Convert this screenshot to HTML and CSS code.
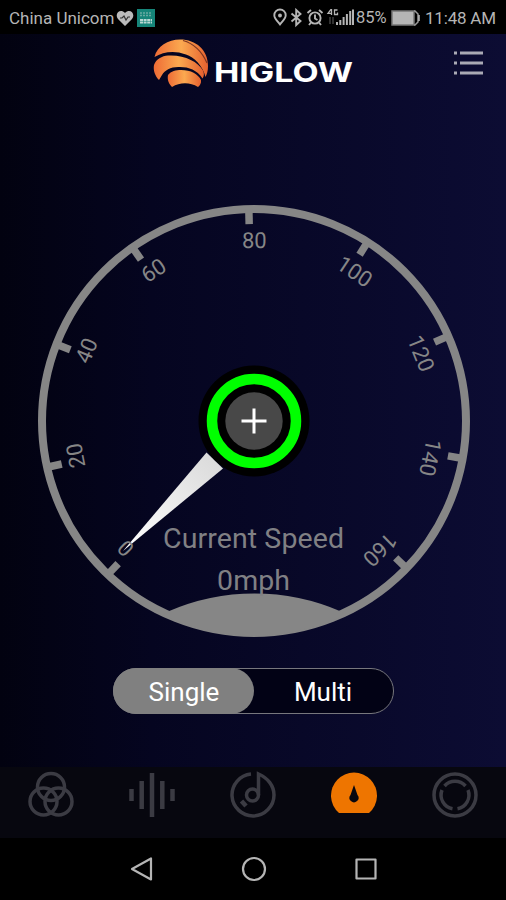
FILE: index.html
```
<!DOCTYPE html>
<html lang="en">
<head>
    <meta charset="UTF-8">
    <meta name="viewport" content="width=device-width, initial-scale=1.0">
    <title>Higlow</title>
    <link rel="stylesheet" href="styles.css">
</head>
<body>
    <!-- Phone status bar -->
    <div class="status">
        <span class="carrier">China Unicom</span>
        <svg class="heart" width="18" height="17" viewBox="0 0 18 17">
            <path d="M9 16 2 9C-2 4 4-2 9 3c5-5 11 1 7 6z" fill="#bbb"/>
            <path d="M4 8h2l2-2 2 4 2-3h2" fill="none" stroke="#333" stroke-width="1.2"/>
        </svg>
        <svg class="app" width="18" height="18" viewBox="0 0 18 18">
            <path d="M0 0h18v18H0z" fill="#168579"/>
            <path d="M3 4h12M3 6.500h12" stroke="#69aaa2" stroke-width="1.500" stroke-dasharray="2 1"/>
            <path d="M3 11h12M3 13.500h12" stroke="#b9d8d4" stroke-width="2" stroke-dasharray="3 .6"/>
        </svg>
        <svg class="signals" width="82" height="20" viewBox="0 0 82 20" fill="none" stroke="#b5b5b5" stroke-width="1.900">
            <path d="M7 16.500C4 12.500 1.300 10.500 1.300 7.200a5.700 5.700 0 0 1 11.400 0C12.700 10.500 10 12.500 7 16.500z"/>
            <circle cx="7" cy="7.500" r="1" />
            <path d="M18.500 5.500 27.500 13l-4.300 4V2l4.300 4-9 7.500"/>
            <circle cx="42" cy="10" r="5.600"/>
            <path d="M42 6.500V10.500l2.500 1.500M34.500 5l3.500-3M46 2l3.500 3M38 14.500l-2 2.500M46 14.500l2 2.500"/>
            <path d="M58.500 1v6M58.500 5.300h-3.500l3-4M64.500 2h-3v4.500h3V4.500" stroke-width="1.300"/>
            <path d="M57 9v7M60 9v7" stroke="#333"/>
            <path d="M64 17v-3M67.300 17v-5M70.600 17V9M73.900 17V6M77.200 17V3M80 17V1.500" stroke-width="2"/>
        </svg>
        <span class="percent">85%</span>
        <svg class="battery" width="29" height="16" viewBox="0 0 29 16">
            <path d="M1 1h22v14H1z" fill="#b5b5b5" stroke="#777" stroke-width="1.500"/>
            <path d="M23 1h1l3 3v8l-3 3h-1" fill="none" stroke="#999" stroke-width="1.500"/>
            <path d="M28 5v6" stroke="#bbb" stroke-width="1.500"/>
        </svg>
        <span class="time">11:48 AM</span>
    </div>

    <header class="header">
        <svg class="logo" width="56" height="52" viewBox="0 0 56 52">
            <defs>
                <linearGradient id="flame">
                    <stop offset="0" stop-color="#ee6b35"/>
                    <stop offset=".5" stop-color="#fba950"/>
                    <stop offset="1" stop-color="#e5602f"/>
                </linearGradient>
            </defs>
            <g fill="url(#flame)">
                <path d="M1.500 21C4 10 15 3.500 27 3.500 43 3.500 55 14 55 30c0 5-1 8-2.500 11C50 30 41 21 33 18.500 21 14 10 16 1.500 21z"/>
                <path d="M1 29C3 23 9 20 15 19.500c16-1 30 6 35 15 1.500 3 1 6-.5 8C44 34 36 31 27 31c-9-.5-15 3-18 8l-3 5C2 40 0 34 1 29z"/>
                <path d="M15 39c3-4 8-5 13-5 10 0 17 4 20 10 .5 3-1 5.500-3 7-8-5-18-5-26 0-3-3-5-7-4-12z"/>
            </g>
            <path d="M30 4.500Q46 9 54 27" fill="none" stroke="#7b3520" stroke-width="1.200"/>
        </svg>
        <span class="brand">HIGLOW</span>
        <svg class="menu" width="31" height="26" viewBox="0 0 31 26" stroke="#aaaab5" stroke-width="3">
            <path d="M1 3h3M7 3h23M1 13h3M7 13h23M1 23h3M7 23h23"/>
        </svg>
    </header>

    <main class="speed">
        <svg class="gauge" width="440" height="440" viewBox="-220 -220 440 440">
            <defs>
                <linearGradient id="needle" x1="0" x2="1" y1="1" y2="0">
                    <stop offset="0" stop-color="#fff"/>
                    <stop offset="1" stop-color="#d8d8d8"/>
                </linearGradient>
            </defs>
            <circle class="dial" r="212"/>
            <!-- Ticks are 33.8 degrees apart -->
            <g class="ticks">
                <path d="M0-212v15" transform="rotate(-136.400)"/>
                <path d="M0-212v15" transform="rotate(-102.600)"/>
                <path d="M0-212v15" transform="rotate(-68.800)"/>
                <path d="M0-212v15" transform="rotate(-35)"/>
                <path d="M0-212v15" transform="rotate(-1.400)"/>
                <path d="M0-212v15" transform="rotate(32.400)"/>
                <path d="M0-212v15" transform="rotate(66.400)"/>
                <path d="M0-212v15" transform="rotate(100.200)"/>
                <path d="M0-212v15" transform="rotate(134)"/>
            </g>
            <path d="M-47.500 31.500-131 130-31 47.500z" fill="url(#needle)"/>
            <g class="numbers">
                <text y="-173" transform="rotate(-134.800)">0</text>
                <text y="-174" transform="rotate(-101)">20</text>
                <text y="-174" transform="rotate(-67.200)">40</text>
                <text y="-173.500" transform="rotate(-33.700)">60</text>
                <text y="-173" transform="rotate(.1)">80</text>
                <text y="-172.500" transform="rotate(34)">100</text>
                <text y="-172.500" transform="rotate(68)">120</text>
                <text y="-172.500" transform="rotate(101.800)">140</text>
                <text y="-172.500" transform="rotate(135.600)">160</text>
            </g>
            <path d="M-86 190.500A217 217 0 0 1 87 190.500L91 194A215 215 0 0 1-91 194z" fill="#868686"/>
            <text class="reading" x="-.5" y="126.500" textLength="181">Current Speed</text>
            <text class="reading" x="-.5" y="168.500" textLength="73">0mph</text>
            <circle r="55.500"/>
            <circle r="42" fill="none" stroke="#0f0" stroke-width="10.500"/>
            <circle r="28.700" fill="#484848"/>
            <path d="M-12.500 0h25M0-12.500v25" stroke="#fff" stroke-width="3"/>
        </svg>

        <div class="switch">
            <span class="option active">Single</span>
            <span class="option">Multi</span>
        </div>
    </main>

    <nav class="tabs">
        <svg width="48" height="48" viewBox="-24 -24 48 48">
            <circle cy="-8" r="13.500"/>
            <circle cx="-7.500" cy="6.500" r="13.500"/>
            <circle cx="7.500" cy="6.500" r="13.500"/>
        </svg>
        <svg width="48" height="48" viewBox="-24 -24 48 48">
            <path d="M-20.500-6V6M-10.300-14V14M0-22V22M10.300-14V14M20.500-6V6" stroke-width="4.500"/>
        </svg>
        <svg width="48" height="48" viewBox="-24 -24 48 48">
            <path d="M-2-21A21 21 0 1 0 21 0C21-9 15-17 5.500-21V0"/>
            <circle cx="-.5" r="6"/>
            <path d="M-11.500 6-7 11" stroke-width="4.500"/>
        </svg>
        <svg width="48" height="48" viewBox="-24 -24 48 48">
            <path class="on" d="M-15 18A23 23 0 1 1 15 18z"/>
            <path class="hand" d="M0-10 3.500 0A4.500 4.500 0 1 1-3.500 0z"/>
        </svg>
        <svg width="48" height="48" viewBox="-24 -24 48 48">
            <circle r="21"/>
            <path d="M-10.500-9A14 14 0 0 1 10.500-9M13-5A14 14 0 0 1 2.500 13.800M-2.500 13.800A14 14 0 0 1-13-5"/>
        </svg>
    </nav>

    <!-- Android back, home and recent buttons -->
    <div class="buttons">
        <svg width="26" height="26" viewBox="0 0 26 26"><path d="M22 2.500v21L3 13z"/></svg>
        <svg width="26" height="26" viewBox="0 0 26 26"><circle cx="13" cy="13" r="11"/></svg>
        <svg width="26" height="26" viewBox="0 0 26 26"><path d="M3.500 3.500h19v19h-19z"/></svg>
    </div>
</body>
</html>
```
FILE: styles.css
```
* {
    box-sizing: border-box;
}

body {
    margin: 0;
    width: 506px;
    height: 900px;
    display: flex;
    flex-direction: column;
    overflow: hidden;
    font-family: Roboto, sans-serif;
    background: linear-gradient(to right, #020210, #050520 30%, #080828 60%, #0c0c33);
}

svg {
    display: block;
    flex: none;
}

/* Status bar */
.status {
    height: 34px;
    flex: none;
    display: flex;
    align-items: center;
    padding: 2px 10px 0 9px;
    background: #000;
    color: #b5b5b5;
    font-size: 17px;
    white-space: nowrap;
}

.carrier {
    width: 107px;
}

.app {
    margin-left: 3px;
}

.signals {
    margin-left: auto;
}

.percent {
    width: 31px;
    margin: -2px 0 0 1px;
    font-size: 16.5px;
}

.battery {
    margin-left: 4px;
}

.time {
    width: 71px;
    margin-left: 5px;
    letter-spacing: -0.2px;
}

/* Logo and menu */
.header {
    height: 66px;
    flex: none;
    display: flex;
    align-items: flex-start;
    padding: 2px 22px 0 153px;
}

.brand {
    margin: 20px 0 0 5px;
    color: #fff;
    font-family: Inter, sans-serif;
    font-size: 26.5px;
    font-weight: 700;
    line-height: 32px;
    transform: scaleX(1.28);
    transform-origin: left;
}

.menu {
    margin: 14px 0 0 auto;
}

/* Speedometer */
.speed {
    flex: 1;
    display: flex;
    flex-direction: column;
    align-items: center;
    padding-top: 101px;
}

.gauge {
    margin-left: 1px;
}

.dial {
    fill: none;
    stroke: #868686;
    stroke-width: 8px;
}

.ticks {
    stroke: #868686;
    stroke-width: 7.5px;
}

.numbers {
    fill: #868686;
    font-size: 22px;
    text-anchor: middle;
}

.reading {
    fill: #808084;
    font-size: 28.5px;
    text-anchor: middle;
}

.switch {
    width: 281px;
    height: 46px;
    display: flex;
    margin-top: 27px;
    border: 1.5px solid #77777d;
    border-radius: 23px;
    background: #020215;
}

.option {
    flex: 1;
    color: #fff;
    font-size: 26px;
    line-height: 47px;
    text-align: center;
}

.active {
    margin: -1px 0 -1px -1px;
    padding: 1px 0 0 2px;
    border-radius: 23px;
    background: #808080;
}

/* Bottom bars */
.tabs {
    height: 71px;
    flex: none;
    display: flex;
    justify-content: space-around;
    padding: 4px 0 0;
    background: #07070f;
}

.tabs svg {
    fill: none;
    stroke: #3b3b43;
    stroke-width: 3.5px;
}

.tabs .on {
    fill: #ee7500;
    stroke: none;
}

.tabs .hand {
    fill: #07070f;
    stroke: none;
}

.buttons {
    height: 62px;
    flex: none;
    display: flex;
    justify-content: center;
    align-items: center;
    gap: 86px;
    padding-left: 1px;
    background: #000;
}

.buttons svg {
    fill: none;
    stroke: #b5b5b5;
    stroke-width: 2.2px;
    stroke-linejoin: round;
}
```
